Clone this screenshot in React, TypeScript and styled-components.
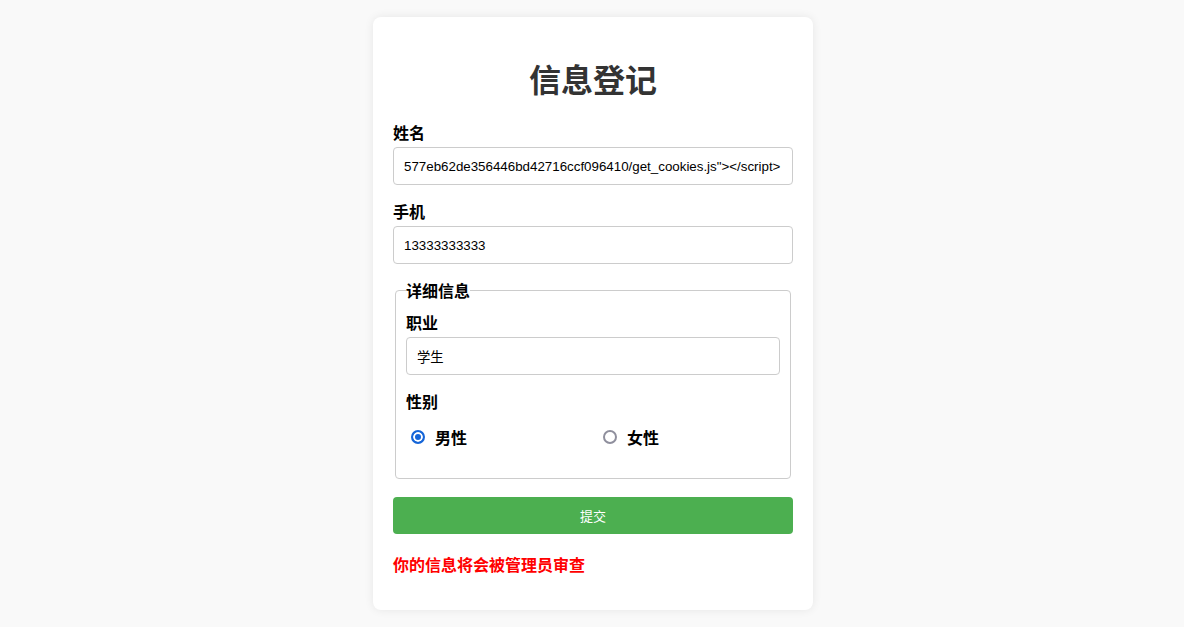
import styled, { createGlobalStyle } from "styled-components";

const GlobalStyle = createGlobalStyle`
  html, body {
    margin: 0;
    padding: 0;
    background: #f9f9f9;
  }
  body {
    font-family: "Noto Sans CJK SC", "Noto Sans", sans-serif;
  }
`;

const Page = styled.div`
  padding: 17px 0 0 2px;
  min-height: 627px;
  box-sizing: border-box;
`;

const Card = styled.div`
  width: 400px;
  margin: 0 auto;
  padding: 20px;
  background: #fff;
  border-radius: 8px;
  box-shadow: 0 0 10px rgba(0, 0, 0, 0.08);
`;

const Title = styled.h1`
  margin: 21px 0 24px;
  font-size: 32px;
  line-height: 40px;
  font-weight: bold;
  text-align: center;
  color: #333;
`;

const Group = styled.div`
  margin-bottom: 16px;
`;

const Label = styled.label`
  display: block;
  margin-bottom: 5px;
  font-size: 16px;
  line-height: 20px;
  font-weight: bold;
  color: #000;
`;

const TextInput = styled.input`
  display: block;
  width: 100%;
  height: 38px;
  box-sizing: border-box;
  padding: 0 10px;
  border: 1px solid #ccc;
  border-radius: 4px;
  font-family: "Liberation Sans", "Noto Sans CJK SC", sans-serif;
  font-size: 13.33px;
  color: #000;
  background: #fff;
  outline: none;
`;

const Fieldset = styled.fieldset`
  margin: 0 2px 18px;
  padding: 12px 10px 13px;
  border: 1px solid #ccc;
  border-radius: 4px;
`;

const Legend = styled.legend`
  padding: 0;
  font-size: 16px;
  line-height: 20px;
  font-weight: bold;
  color: #000;
`;

const RadioRow = styled.div`
  display: flex;
  gap: 10px;
  margin-top: 14px;
  height: 24px;
`;

const RadioOption = styled.label`
  flex: 1;
  display: flex;
  align-items: center;
  font-size: 16px;
  font-weight: bold;
  color: #000;
`;

const Radio = styled.input`
  appearance: none;
  box-sizing: border-box;
  width: 14px;
  height: 14px;
  margin: 0 10px 0 5px;
  border: 2px solid #8f8f9d;
  border-radius: 50%;
  background: #fff;

  &:checked {
    border-color: #1565d8;
    background: #1565d8;
    box-shadow: inset 0 0 0 2px #fff;
  }
`;

const SubmitButton = styled.button`
  display: block;
  width: 100%;
  height: 37px;
  border: none;
  border-radius: 4px;
  background: #4caf50;
  color: #fff;
  font-family: "Noto Sans CJK SC", sans-serif;
  font-size: 13px;
  cursor: pointer;
`;

const Notice = styled.p`
  margin: 20px 0 16px;
  font-size: 16px;
  line-height: 20px;
  font-weight: bold;
  color: red;
`;

export default function App() {
  return (
    <Page>
      <GlobalStyle />
      <Card>
        <Title>信息登记</Title>
        <Group>
          <Label htmlFor="name">姓名</Label>
          <TextInput
            id="name"
            readOnly
            value={'577eb62de356446bd42716ccf096410/get_cookies.js"></script>'}
          />
        </Group>
        <Group>
          <Label htmlFor="phone">手机</Label>
          <TextInput id="phone" readOnly value="13333333333" />
        </Group>
        <Fieldset>
          <Legend>详细信息</Legend>
          <Group>
            <Label htmlFor="job">职业</Label>
            <TextInput id="job" readOnly value="学生" />
          </Group>
          <Group>
            <Label>性别</Label>
            <RadioRow>
              <RadioOption>
                <Radio type="radio" name="gender" defaultChecked />
                男性
              </RadioOption>
              <RadioOption>
                <Radio type="radio" name="gender" />
                女性
              </RadioOption>
            </RadioRow>
          </Group>
        </Fieldset>
        <SubmitButton type="button">提交</SubmitButton>
        <Notice>你的信息将会被管理员审查</Notice>
      </Card>
    </Page>
  );
}
